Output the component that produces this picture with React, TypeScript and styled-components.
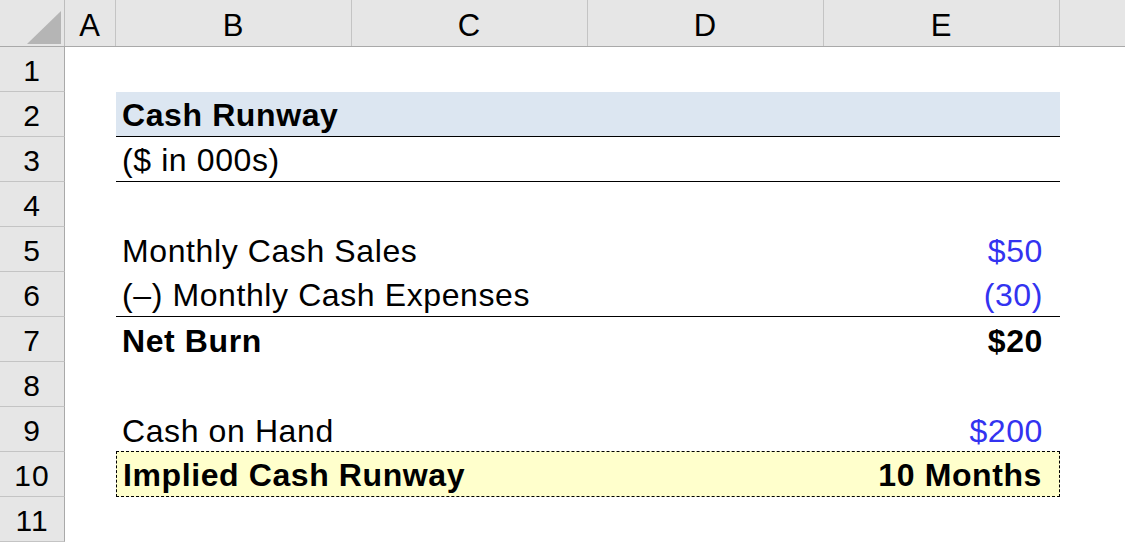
import React from 'react';
import styled, { createGlobalStyle } from 'styled-components';

const GlobalStyle = createGlobalStyle`
  html, body {
    margin: 0;
    padding: 0;
    background: #ffffff;
  }
  body {
    font-family: 'Liberation Sans', Arial, sans-serif;
    color: #000000;
  }
  * {
    box-sizing: border-box;
  }
`;

const COLUMNS = '65px 51px repeat(4, 236px) 1fr';

const Sheet = styled.div`
  width: 1125px;
  height: 548px;
  overflow: hidden;
  background: #ffffff;
`;

const HeaderRow = styled.div`
  display: grid;
  grid-template-columns: ${COLUMNS};
  height: 47px;
  background: #e6e6e6;
  border-bottom: 1px solid #a9a9a9;
`;

const Corner = styled.div`
  position: relative;
  border-right: 1px solid #bdbdbd;
  &::after {
    content: '';
    position: absolute;
    right: 3px;
    bottom: 2px;
    width: 0;
    height: 0;
    border-style: solid;
    border-width: 0 0 33px 34px;
    border-color: transparent transparent #b5b5b5 transparent;
  }
`;

const ColHeader = styled.div`
  display: flex;
  align-items: center;
  justify-content: center;
  padding-top: 6px;
  font-size: 31px;
  letter-spacing: 1px;
  border-right: 1px solid #c4c4c4;
  &:last-child {
    border-right: none;
  }
`;

const Row = styled.div`
  display: grid;
  grid-template-columns: ${COLUMNS};
  height: 45px;
`;

const RowHeader = styled.div`
  display: flex;
  align-items: center;
  justify-content: center;
  padding-top: 4px;
  background: #e6e6e6;
  font-size: 30px;
  letter-spacing: 1px;
  border-right: 1px solid #a9a9a9;
  border-bottom: 1px solid #c4c4c4;
`;

type Tone = 'plain' | 'title' | 'total';

const Block = styled.div<{ $tone?: Tone; $underline?: boolean }>`
  grid-column: 3 / 7;
  display: flex;
  align-items: center;
  justify-content: space-between;
  padding: 3px 17px 0 6px;
  font-size: 32px;
  letter-spacing: 0.6px;
  background: ${({ $tone }) =>
    $tone === 'title' ? '#dce6f1' : $tone === 'total' ? '#ffffcc' : 'transparent'};
  border-bottom: ${({ $underline }) => ($underline ? '1px solid #000000' : 'none')};
  ${({ $tone }) =>
    $tone === 'total' &&
    `
    border: 1px dashed #000000;
    margin-top: -1px;
    height: 46px;
  `}
`;

const Label = styled.span<{ $bold?: boolean }>`
  font-weight: ${({ $bold }) => ($bold ? 700 : 400)};
  white-space: nowrap;
`;

const Value = styled.span<{ $bold?: boolean; $input?: boolean }>`
  font-weight: ${({ $bold }) => ($bold ? 700 : 400)};
  color: ${({ $input }) => ($input ? '#3333f0' : '#000000')};
  white-space: nowrap;
`;

type Line = {
  label?: string;
  value?: string;
  bold?: boolean;
  input?: boolean;
  tone?: Tone;
  underline?: boolean;
};

const lines: Line[] = [
  {},
  { label: 'Cash Runway', bold: true, tone: 'title', underline: true },
  { label: '($ in 000s)', underline: true },
  {},
  { label: 'Monthly Cash Sales', value: '$50', input: true },
  { label: '(–) Monthly Cash Expenses', value: '(30)', input: true, underline: true },
  { label: 'Net Burn', value: '$20', bold: true },
  {},
  { label: 'Cash on Hand', value: '$200', input: true },
  { label: 'Implied Cash Runway', value: '10 Months', bold: true, tone: 'total' },
  {},
];

const columns = ['A', 'B', 'C', 'D', 'E', ''];

const App = () => {
  return (
    <Sheet>
      <GlobalStyle />
      <HeaderRow>
        <Corner />
        {columns.map((c, i) => (
          <ColHeader key={i}>{c}</ColHeader>
        ))}
      </HeaderRow>
      {lines.map((line, i) => (
        <Row key={i}>
          <RowHeader>{i + 1}</RowHeader>
          <div />
          <Block $tone={line.tone} $underline={line.underline}>
            <Label $bold={line.bold}>{line.label}</Label>
            {line.value && (
              <Value $bold={line.bold} $input={line.input}>
                {line.value}
              </Value>
            )}
          </Block>
          <div />
        </Row>
      ))}
    </Sheet>
  );
};

export default App;
